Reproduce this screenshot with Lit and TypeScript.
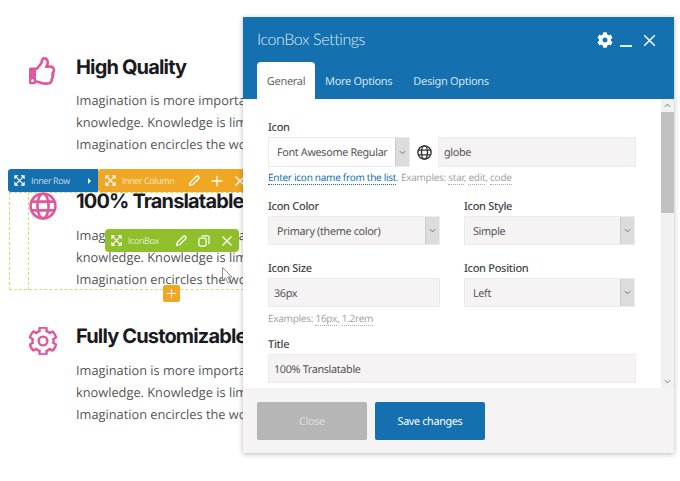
import { LitElement, html, css, svg } from "lit";
import { customElement } from "lit/decorators.js";

const COG = "M487.4 315.7l-42.6-24.6c4.3-23.2 4.3-47 0-70.2l42.6-24.6c4.9-2.8 7.1-8.6 5.5-14-11.1-35.6-30-67.8-54.7-94.6-3.8-4.1-10-5.1-14.8-2.3L380.8 110c-17.9-15.4-38.5-27.3-60.8-35.1V25.8c0-5.6-3.9-10.5-9.4-11.7-36.7-8.2-74.3-7.8-109.2 0-5.5 1.2-9.4 6.1-9.4 11.7V75c-22.2 7.9-42.8 19.8-60.8 35.1L88.7 85.5c-4.9-2.8-11-1.9-14.8 2.3-24.7 26.7-43.6 58.9-54.7 94.6-1.7 5.4.6 11.2 5.5 14L67.3 221c-4.3 23.2-4.3 47 0 70.2l-42.6 24.6c-4.9 2.8-7.1 8.6-5.5 14 11.1 35.6 30 67.8 54.7 94.6 3.8 4.1 10 5.1 14.8 2.3l42.6-24.6c17.9 15.4 38.5 27.3 60.8 35.1v49.2c0 5.6 3.9 10.5 9.4 11.7 36.7 8.2 74.3 7.8 109.2 0 5.5-1.2 9.4-6.1 9.4-11.7v-49.2c22.2-7.9 42.8-19.8 60.8-35.1l42.6 24.6c4.9 2.8 11 1.9 14.8-2.3 24.7-26.7 43.6-58.9 54.7-94.6 1.5-5.5-.7-11.3-5.6-14.1zM256 336c-44.1 0-80-35.9-80-80s35.9-80 80-80 80 35.9 80 80-35.9 80-80 80z";
const THUMB = "M466.27 286.69C475.04 271.84 480 256 480 236.85c0-44.015-37.218-85.58-85.82-85.58H357.7c4.92-12.81 8.85-28.13 8.85-46.54C366.55 31.936 328.86 0 271.28 0c-61.607 0-58.093 94.933-71.76 108.6-22.747 22.747-49.615 66.447-68.76 83.4H32c-17.673 0-32 14.327-32 32v240c0 17.673 14.327 32 32 32h64c14.893 0 27.408-10.174 30.978-23.95 44.509 1.001 75.06 39.94 177.802 39.94 7.22 0 15.22.01 22.22.01 77.117 0 111.986-39.423 112.94-95.33 13.319-18.425 20.299-43.122 17.34-66.99 9.854-18.451 13.664-40.343 8.99-62.99zm-61.75 53.83c12.56 21.13 1.26 49.41-13.94 57.57 7.7 48.78-17.608 65.9-53.12 65.9h-37.82c-71.639 0-118.029-37.82-171.64-37.82V240h10.92c28.36 0 67.98-70.89 94.54-97.46 28.36-28.36 18.91-75.63 37.82-94.54 47.27 0 47.27 32.98 47.27 56.73 0 39.17-28.36 56.72-28.36 94.54h103.99c21.11 0 37.73 18.91 37.82 37.82.09 18.9-12.82 37.81-28.36 37.82 12.56 13.57 11.5 36.93-.14 46.41zM88 432c0 13.255-10.745 24-24 24s-24-10.745-24-24 10.745-24 24-24 24 10.745 24 24z";

const icon = (cls: string, box: string, body: unknown) =>
  html`<svg class=${cls} viewBox=${box} aria-hidden="true">${body}</svg>`;

const expand = () => icon("ico exp", "0 0 16 16", svg`
  <path d="M3.5 3.5 12.5 12.5M12.5 3.5 3.5 12.5" fill="none" stroke="currentColor" stroke-width="1.8"/>
  <path d="M0.5 0.5H6.5L0.5 6.5ZM15.5 0.5V6.5L9.5 0.5ZM0.5 15.5V9.5L6.5 15.5ZM15.5 15.5H9.5L15.5 9.5Z" fill="currentColor"/>`);
const pencil = () => icon("ico act", "0 0 16 16", svg`
  <path d="M2 14 3 10 11 2C12 1 13.2 1 14 2S15 4 14 5L6 13Z" fill="none" stroke="currentColor" stroke-width="1.7" stroke-linejoin="round"/>`);
const plus = () => icon("ico act", "0 0 16 16", svg`
  <path d="M8 1V15M1 8H15" stroke="currentColor" stroke-width="1.7"/>`);
const cross = () => icon("ico act", "0 0 16 16", svg`
  <path d="M2 2 14 14M14 2 2 14" stroke="currentColor" stroke-width="1.7"/>`);
const copy = () => icon("ico act", "0 0 16 16", svg`
  <rect x="1.2" y="4.2" width="9.6" height="10.6" rx="2" fill="none" stroke="currentColor" stroke-width="1.6"/>
  <path d="M5 2.4C5 1.6 5.6 1.2 6.4 1.2H13C14 1.2 14.8 2 14.8 3V10C14.8 10.8 14.3 11.4 13.4 11.4" fill="none" stroke="currentColor" stroke-width="1.6"/>`);
const globe = (cls: string) => icon(cls, "0 0 28 28", svg`
  <g fill="none" stroke="currentColor" stroke-width="2.6">
    <circle cx="14" cy="14" r="12.4"/>
    <ellipse cx="14" cy="14" rx="5.6" ry="12.4"/>
    <path d="M2.6 9.6H25.4M2.6 18.4H25.4"/>
  </g>`);
const chevron = () => icon("chev", "0 0 8 5", svg`
  <path d="M1 1 4 4 7 1" fill="none" stroke="currentColor" stroke-width="1"/>`);

const ROWS = [
  { title: "High Quality", cls: "first", ico: icon("big thumb", "0 0 512 512", svg`<path d=${THUMB} fill="currentColor"/>`) },
  { title: "100% Translatable", cls: "", ico: globe("big") },
  { title: "Fully Customizable", cls: "", ico: icon("big", "0 0 512 512", svg`<path d=${COG} fill="none" stroke="currentColor" stroke-width="44"/>`) },
];

@customElement("app-root")
export class AppRoot extends LitElement {
  static styles = css`
    :host { display: block; width: 680px; height: 481px; }
    * { box-sizing: border-box; }
    .page { position: relative; width: 680px; height: 481px; overflow: hidden; background: #fff; font-family: "Open Sans", sans-serif; text-rendering: geometricPrecision; }

    .content { width: 243px; height: 481px; overflow: hidden; padding: 52px 0 0 29px; display: flex; flex-direction: column; gap: 31px; }
    .row { display: grid; grid-template-columns: 47px 260px; }
    .row h2 { margin: 0 0 8px; font: 700 20px/30px Inter, sans-serif; letter-spacing: -0.85px; color: #1b1b1f; white-space: nowrap; }
    .row.first h2 { margin-bottom: 7px; }
    .row p { margin: 0; font-size: 12.8px; line-height: 22px; color: #555; white-space: nowrap; }
    .big { display: block; width: 28px; height: 28px; color: #e2569b; margin-top: 6px; }
    .thumb { margin-top: 5px; }

    .dash { position: absolute; border: 1px dashed #d8d87a; }
    .dash.outer { left: 9px; top: 192px; width: 240px; height: 98px; }
    .dash.inner { left: 28px; top: 192px; width: 1px; height: 98px; border-width: 0 0 0 1px; }

    .bar { position: absolute; display: flex; align-items: center; height: 23px; color: #fff; font-size: 9px; letter-spacing: -0.42px; }
    .bar .lbl { opacity: 0.72; white-space: nowrap; }
    .bar.rowbar { left: 8px; top: 169px; width: 90px; background: #1470ae; border-radius: 3px 0 0 3px; padding-left: 6px; }
    .bar.col { left: 98px; top: 169px; width: 145px; background: #f0a723; border-radius: 3px 0 0 3px; padding-left: 7px; overflow: hidden; }
    .bar.box { left: 105px; top: 229px; width: 134px; background: #8fc02c; border-radius: 4px; padding-left: 6px; }
    .ico { display: block; flex: none; }
    .exp { width: 11px; height: 11px; margin-right: 6px; }
    .act { width: 12px; height: 12px; }
    .tri { width: 0; height: 0; border-left: 3px solid #fff; border-top: 3px solid transparent; border-bottom: 3px solid transparent; margin-left: auto; margin-right: 7px; }
    .acts { display: flex; align-items: center; gap: 11px; margin-left: auto; }
    .col .acts { margin-left: 14px; flex: none; }
    .box .acts { padding-right: 6px; }

    .add { position: absolute; left: 163px; top: 285px; width: 17px; height: 17px; background: #f0a723; border-radius: 2px; color: #fff; display: flex; align-items: center; justify-content: center; }
    .add .act { width: 11px; height: 11px; }
    .cursor { position: absolute; left: 222px; top: 267px; width: 11px; height: 17px; }

    .modal { position: absolute; left: 243px; top: 17px; width: 431px; height: 436px; background: #fff; display: flex; flex-direction: column; box-shadow: 0 1px 5px rgba(0,0,0,0.28); font-family: "Noto Sans", sans-serif; }
    .head { flex: none; height: 82px; background: #1470ae; color: #fff; display: flex; flex-direction: column; justify-content: space-between; padding: 0 14px; }
    .top { display: flex; align-items: center; height: 45px; }
    .top h1 { margin: 0; font-weight: 300; font-family: Lato, sans-serif; font-size: 16px; letter-spacing: -0.4px; color: #dfeaf3; flex: 1; white-space: nowrap; }
    .top .ctl { display: flex; align-items: center; padding-top: 1px; }
    .gear { width: 16px; height: 16px; color: #fff; }
    .min { width: 12px; height: 2px; background: #e4eef5; margin: 12px 11px 0 7px; }
    .close { width: 13px; height: 13px; color: #fff; margin-right: 4px; }
    .tabs { display: flex; height: 37px; font-size: 11px; letter-spacing: -0.3px; }
    .tab { display: flex; align-items: center; padding: 1px 10px 0; color: #d5e4ef; white-space: nowrap; }
    .tab.on { width: 58px; justify-content: center; padding: 1px 0 0; background: #fff; color: #666; border-radius: 4px 4px 0 0; }
    .tab:last-child { margin-left: 1px; }

    .bodywrap { flex: 1; display: flex; min-height: 0; }
    .form { flex: 1; min-width: 0; padding: 20px 25px 0; display: flex; flex-direction: column; font-size: 10.8px; letter-spacing: -0.33px; color: #555; }
    .bar-scroll { flex: none; width: 13px; background: #f1f1f1; display: flex; flex-direction: column; color: #555; }
    .bar-scroll .end { height: 13px; display: flex; align-items: center; justify-content: center; }
    .bar-scroll .end.up { transform: scaleY(-1); }
    .bar-scroll .thumbb { height: 101px; background: #c1c1c1; }
    .bar-scroll .fill { flex: 1; }
    .chev { width: 7px; height: 5px; display: block; color: #666; }

    label { display: block; font-weight: 500; color: #444; font-size: 11px; letter-spacing: -0.3px; line-height: 16px; padding-top: 1px; height: 16px; margin-bottom: 2px; white-space: nowrap; }
    .ctrl { height: 29px; background: #f5f3f3; border: 1px solid #ececec; display: flex; align-items: center; padding-left: 5px; color: #555; white-space: nowrap; }
    .two .ctrl, .mt3 .ctrl { padding-top: 2px; }
    .two .sel, .mt3 .sel { padding-top: 0; }
    .two .sel .txt { padding-top: 2px; }
    .sel { padding: 0; }
    .sel .txt { flex: 1; min-width: 0; padding-left: 8px; }
    .arrow { flex: none; width: 14px; align-self: stretch; background: #dcdcdc; border-left: 1px solid #ccc; display: flex; align-items: center; justify-content: center; }
    .iconrow { display: flex; height: 30px; }
    .iconrow .sel { flex: none; width: 142px; height: 30px; background: #fff; }
    .gbox { flex: none; width: 28px; display: flex; align-items: center; justify-content: center; color: #333; }
    .small-globe { width: 15px; height: 15px; display: block; }
    .iconrow .ctrl.grow { flex: 1; height: 30px; }
    .help { font-size: 10px; letter-spacing: -0.28px; line-height: 14px; color: #a5a5a5; margin-top: 3px; white-space: nowrap; }
    .help.lower { margin-top: 4px; }
    .help a { color: #1470ae; border-bottom: 1px dotted #1470ae; }
    .help u { text-decoration: none; border-bottom: 1px dotted #aaa; }
    .two { display: grid; grid-template-columns: 172px 171px; column-gap: 24px; }
    .mt1 { margin-top: 14px; }
    .mt2 { margin-top: 15px; }
    .mt3 { margin-top: 11px; }

    .foot { flex: none; height: 65px; background: #f5f3f3; display: flex; align-items: center; gap: 8px; padding: 0 14px; font-size: 10.8px; letter-spacing: -0.33px; }
    .btn { width: 110px; height: 38px; padding-top: 1px; border-radius: 2px; display: flex; align-items: center; justify-content: center; color: #fff; }
    .btn.off { background: #b6b6b6; color: #dcdcdc; }
    .btn.pri { background: #1470ae; }
  `;

  render() {
    const para = html`<p>Imagination is more important than<br />knowledge. Knowledge is limited.<br />Imagination encircles the world.</p>`;
    return html`
      <div class="page">
        <div class="content">
          ${ROWS.map(
            (r) => html`<div class="row ${r.cls}"><div>${r.ico}</div><div><h2>${r.title}</h2>${para}</div></div>`
          )}
        </div>

        <div class="dash outer"></div>
        <div class="dash inner"></div>

        <div class="bar rowbar">${expand()}<span class="lbl">Inner Row</span><span class="tri"></span></div>
        <div class="bar col">${expand()}<span class="lbl">Inner Column</span><span class="acts">${pencil()}${plus()}${cross()}</span></div>
        <div class="bar box">${expand()}<span class="lbl">IconBox</span><span class="acts">${pencil()}${copy()}${cross()}</span></div>
        <div class="add">${plus()}</div>
        <svg class="cursor" viewBox="0 0 11 17" aria-hidden="true"><path d="M0.5 0.5V13.5L3.6 10.8 6 16 8 15 5.7 10H10Z" fill="#fff" fill-opacity="0.85" stroke="#777" stroke-width="0.8"/></svg>

        <section class="modal">
          <div class="head">
            <div class="top">
              <h1>IconBox Settings</h1>
              <div class="ctl">
                ${icon("gear", "0 0 512 512", svg`<path d=${COG} fill="currentColor"/>`)}
                <div class="min"></div>
                ${icon("close", "0 0 16 16", svg`<path d="M1.5 1.5 14.5 14.5M14.5 1.5 1.5 14.5" stroke="currentColor" stroke-width="1.8"/>`)}
              </div>
            </div>
            <div class="tabs">
              <div class="tab on">General</div>
              <div class="tab">More Options</div>
              <div class="tab">Design Options</div>
            </div>
          </div>
          <div class="bodywrap">
            <div class="form">
              <label>Icon</label>
              <div class="iconrow">
                <div class="ctrl sel"><span class="txt">Font Awesome Regular</span><span class="arrow">${chevron()}</span></div>
                <div class="gbox">${globe("small-globe")}</div>
                <div class="ctrl grow">globe</div>
              </div>
              <div class="help"><a>Enter icon name from the list</a>. Examples: <u>star</u>, <u>edit</u>, <u>code</u></div>
              <div class="two mt1">
                <div><label>Icon Color</label><div class="ctrl sel"><span class="txt">Primary (theme color)</span><span class="arrow">${chevron()}</span></div></div>
                <div><label>Icon Style</label><div class="ctrl sel"><span class="txt">Simple</span><span class="arrow">${chevron()}</span></div></div>
              </div>
              <div class="two mt2">
                <div><label>Icon Size</label><div class="ctrl">36px</div><div class="help lower">Examples: <u>16px</u>, <u>1.2rem</u></div></div>
                <div><label>Icon Position</label><div class="ctrl sel"><span class="txt">Left</span><span class="arrow">${chevron()}</span></div></div>
              </div>
              <div class="mt3">
                <label>Title</label>
                <div class="ctrl">100% Translatable</div>
              </div>
            </div>
            <div class="bar-scroll">
              <div class="end up">${chevron()}</div>
              <div class="thumbb"></div>
              <div class="fill"></div>
              <div class="end">${chevron()}</div>
            </div>
          </div>
          <div class="foot">
            <div class="btn off">Close</div>
            <div class="btn pri">Save changes</div>
          </div>
        </section>
      </div>
    `;
  }
}
